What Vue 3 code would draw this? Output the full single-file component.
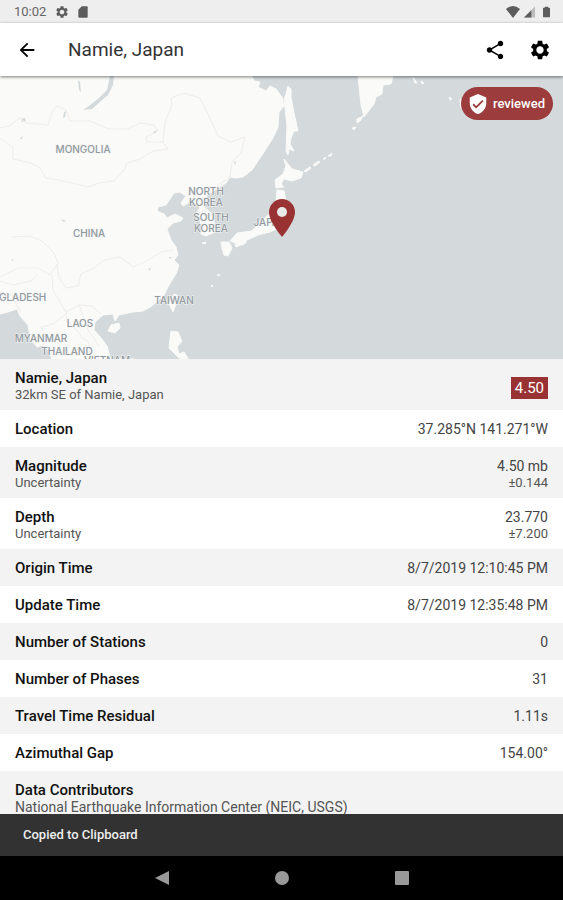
<template>
  <div class="screen">
    <div class="status-bar">
      <span class="clock">10:02</span>
      <svg class="status-icon" viewBox="0 0 24 24"><path :d="icons.gear" /></svg>
      <svg class="status-icon" viewBox="0 0 24 24"><path :d="icons.sdCard" /></svg>
      <div class="status-right">
        <svg class="wifi" viewBox="0 0 14 12"><path d="M0 3Q7-3 14 3L7 12z" /></svg>
        <svg class="signal" viewBox="0 0 12 12">
          <path d="M0 12L12 0V12z" opacity=".35" />
          <path d="M0 12L8 4V12z" />
        </svg>
        <svg class="battery" viewBox="0 0 8 12"><path d="M2 0h4v1h1q1 0 1 1v9q0 1-1 1H1q-1 0-1-1V2q0-1 1-1h1z" /></svg>
      </div>
    </div>

    <header class="app-bar">
      <button class="icon-btn" aria-label="Back">
        <svg viewBox="0 0 24 24"><path :d="icons.back" /></svg>
      </button>
      <h1>Namie, Japan</h1>
      <button class="icon-btn" aria-label="Share">
        <svg viewBox="0 0 24 24"><path :d="icons.share" /></svg>
      </button>
      <button class="icon-btn" aria-label="Settings">
        <svg viewBox="0 0 24 24"><path :d="icons.gear" /></svg>
      </button>
    </header>

    <main class="content">
      <section class="map">
        <svg class="map-canvas" viewBox="0 76 563 283" preserveAspectRatio="xMidYMid slice">
          <g class="land">
            <path v-for="(d, i) in land" :key="i" :d="d" />
          </g>
          <g class="water">
            <path v-for="(d, i) in lakes" :key="i" :d="d" />
          </g>
          <g class="borders">
            <path v-for="(d, i) in borders" :key="i" :d="d" />
          </g>
          <g class="labels">
            <text v-for="l in labels" :key="l.text + l.y" :x="l.x" :y="l.y">{{ l.text }}</text>
          </g>
          <path class="pin" d="M282 199c-7 0-13 6-13 13 0 10 13 25 13 25s13-15 13-25c0-7-6-13-13-13z" />
          <circle class="pin-hole" cx="282" cy="212" r="5" />
        </svg>
        <div class="review-badge">
          <svg viewBox="0 0 24 24"><path :d="icons.shield" /></svg>
          <span>reviewed</span>
        </div>
      </section>

      <dl class="details">
        <div class="row" v-for="row in rows" :key="row.label">
          <dt>
            {{ row.label }}
            <small v-if="row.sub">{{ row.sub }}</small>
            <small v-if="row.source" class="source">{{ row.source }}</small>
          </dt>
          <dd v-if="row.magnitude"><span class="magnitude">{{ row.magnitude }}</span></dd>
          <dd v-else-if="row.value">
            {{ row.value }}
            <small v-if="row.subValue">{{ row.subValue }}</small>
          </dd>
        </div>
      </dl>
    </main>

    <div class="snackbar" role="status">Copied to Clipboard</div>

    <nav class="nav-bar">
      <button aria-label="Back"><svg viewBox="0 0 16 16"><path d="M15 1v14L1 8z" /></svg></button>
      <button aria-label="Home"><svg viewBox="0 0 16 16"><circle cx="8" cy="8" r="7" /></svg></button>
      <button aria-label="Recent apps"><svg viewBox="0 0 16 16"><rect x="1" y="1" width="14" height="14" rx="1" /></svg></button>
    </nav>
  </div>
</template>

<script setup>
const icons = {
  back: 'M20 11H7.83l5.59-5.59L12 4l-8 8 8 8 1.41-1.41L7.83 13H20v-2z',
  share: 'M18 16.08c-.76 0-1.44.3-1.96.77L8.91 12.7c.05-.23.09-.46.09-.7s-.04-.47-.09-.7l7.05-4.11c.54.5 1.25.81 2.04.81 1.66 0 3-1.34 3-3s-1.34-3-3-3-3 1.34-3 3c0 .24.04.47.09.7L8.04 9.81C7.5 9.31 6.79 9 6 9c-1.66 0-3 1.34-3 3s1.34 3 3 3c.79 0 1.5-.31 2.04-.81l7.12 4.16c-.05.21-.08.43-.08.65 0 1.61 1.31 2.92 2.92 2.92s2.92-1.31 2.92-2.92-1.31-2.92-2.92-2.92z',
  gear: 'M19.43 12.98c.04-.32.07-.64.07-.98s-.03-.66-.07-.98l2.11-1.65c.19-.15.24-.42.12-.64l-2-3.46c-.12-.22-.39-.3-.61-.22l-2.49 1c-.52-.4-1.08-.73-1.69-.98l-.38-2.65C14.46 2.18 14.25 2 14 2h-4c-.25 0-.46.18-.49.42l-.38 2.65c-.61.25-1.17.59-1.69.98l-2.49-1c-.23-.09-.49 0-.61.22l-2 3.46c-.13.22-.07.49.12.64l2.11 1.65c-.04.32-.07.65-.07.98s.03.66.07.98l-2.11 1.65c-.19.15-.24.42-.12.64l2 3.46c.12.22.39.3.61.22l2.49-1c.52.4 1.08.73 1.69.98l.38 2.65c.03.24.24.42.49.42h4c.25 0 .46-.18.49-.42l.38-2.65c.61-.25 1.17-.59 1.69-.98l2.49 1c.23.09.49 0 .61-.22l2-3.46c.12-.22.07-.49-.12-.64l-2.11-1.65zM12 16c-2.21 0-4-1.79-4-4s1.79-4 4-4 4 1.79 4 4-1.79 4-4 4z',
  sdCard: 'M18 2h-8L4 8v12c0 1.100.9 2 2 2h12c1.100 0 2-.9 2-2V4c0-1.100-.9-2-2-2z',
  shield: 'M12 1L3 5v6c0 5.550 3.840 10.740 9 12 5.160-1.260 9-6.450 9-12V5l-9-4zm-2 16l-4-4 1.410-1.410L10 14.170l6.590-6.590L18 9l-8 8z'
}

const land = [
  // mainland Asia
  'M0 76H252L254 81 260 82 258 87 266 91 270 86 276 89 282 97 284 106 279 112 278 127 273 138 262 155 252 170 243 177 235 178 230 177 226 183 217 189 207 195 206 202 204 207 211 213 214 220 215 232 206 236 201 234 202 226 199 219 197 212 200 208 196 204 190 202 183 206 181 203 186 196 180 192 174 193 166 205 158 207 157 211 164 214 167 218 175 214 183 218 181 221 173 223 167 229 171 240 176 247 178 255 174 260 179 265 176 274 169 285 164 295 152 306 143 311 133 312 119 315 115 321 113 314 103 315 95 322 94 330 102 339 107 346 111 360H52L50 352 43 345 37 347 31 340 28 325 20 316 17 309 8 312 0 314Z',
  // Sakhalin
  'M288 86L291 89 291 97 294 113 298 131 294 131 291 138 290 144 294 151 289 149 288 155 286 151 287 126 284 99 286 94Z',
  // Hokkaido
  'M284 159L292 169 303 172 301 178 292 181 284 179 281 184 284 187 276 188 275 180 283 174 286 166Z',
  // Honshu
  'M277 190L284 191 286 201 283 226 270 232 258 235 247 240 243 245 235 243 230 241 237 233 252 231 260 222 272 212 276 202Z',
  // Kyushu and Shikoku
  'M221 242L229 242 232 248 228 256 224 255 222 248ZM235 244L245 240 246 243 236 247Z',
  // Hainan, Taiwan, Luzon
  'M111 325L119 323 120 328 115 333 108 331ZM174 294L177 295 176 304 173 312 169 304ZM171 331L178 332 182 341 177 347 179 354 184 352 189 360 179 358 169 348Z',
  // Kamchatka and nearby islands
  'M358 76H393L391 84 383 85 382 94 376 97 374 104 367 113 364 117 361 105ZM357 119L363 116 360 121 357 123ZM352 128L356 127 354 130ZM413 77L417 83 415 83ZM421 81L424 83 422 84ZM449 97L452 99 450 100ZM460 99L463 101 461 108Z',
  // Kuril chain
  'M304 171L310 167 311 168 306 172ZM313 165L319 161 320 162 315 166ZM323 159L326 157 325 159ZM328 156L332 153 331 156ZM202 243L206 242 205 244ZM218 274L220 275 218 276ZM211 285L213 286 212 287ZM113 360L118 358 133 359 138 360Z'
]

const lakes = [
  'M110 76H114L113 85 108 95 101 101 92 109 83 110 89 106 99 98 107 90Z',
  'M21 119L25 118 26 121 22 122ZM64 112L66 111 65 117 63 118ZM20 138L23 136 21 140ZM153 132L157 130 155 134ZM61 219L66 221 63 222ZM78 80L80 82 81 92 79 90ZM234 162L236 161 235 166ZM268 76L286 76 281 82 285 85 275 84ZM148 269L151 268 150 271ZM169 257L172 257 170 259ZM11 259L14 260 12 261Z'
]

const borders = [
  'M0 128L9 126 20 118 27 123 48 125 52 112 57 106 66 110 70 121 90 121 109 129 127 129 140 123 154 125 158 131 146 137 147 142 163 142 168 149 153 151 140 159 127 163 124 170 114 181 99 183 88 187 72 183 59 180 46 178 40 168 31 163 13 159 13 147 0 138',
  'M163 142L165 122 172 105 171 98 184 93 200 98 207 112 218 136 231 142 245 137 241 153 232 162 230 177',
  'M230 177L214 188 199 188 186 196M197 215L208 207M0 277L18 268 38 268 50 275 58 263 54 253 42 241 30 236 12 237',
  'M0 281L13 285 31 281 39 273M57 264L59 278 66 288 78 286 81 274 94 268 104 260 120 257 133 267 147 261 161 252 173 250',
  'M52 275L53 290 60 302 66 312 79 305 92 306 101 314M66 312L67 322 77 330 82 338 88 341 91 354M79 305L84 318 88 330 99 346M66 314L53 324 41 327 47 340 43 345M0 292L12 295 21 314'
]

const labels = [
  { text: 'MONGOLIA', x: 83, y: 153 },
  { text: 'CHINA', x: 89, y: 237 },
  { text: 'NORTH', x: 206, y: 195 },
  { text: 'KOREA', x: 206, y: 206 },
  { text: 'SOUTH', x: 211, y: 221 },
  { text: 'KOREA', x: 211, y: 232 },
  { text: 'JAPAN', x: 270, y: 226 },
  { text: 'BANGLADESH', x: 12, y: 301 },
  { text: 'TAIWAN', x: 174, y: 304 },
  { text: 'LAOS', x: 80, y: 327 },
  { text: 'MYANMAR', x: 41, y: 342 },
  { text: 'THAILAND', x: 67, y: 355 },
  { text: 'VIETNAM', x: 107, y: 364 }
]

const rows = [
  { label: 'Namie, Japan', sub: '32km SE of Namie, Japan', magnitude: '4.50' },
  { label: 'Location', value: '37.285°N 141.271°W' },
  { label: 'Magnitude', sub: 'Uncertainty', value: '4.50 mb', subValue: '±0.144' },
  { label: 'Depth', sub: 'Uncertainty', value: '23.770', subValue: '±7.200' },
  { label: 'Origin Time', value: '8/7/2019 12:10:45 PM' },
  { label: 'Update Time', value: '8/7/2019 12:35:48 PM' },
  { label: 'Number of Stations', value: '0' },
  { label: 'Number of Phases', value: '31' },
  { label: 'Travel Time Residual', value: '1.11s' },
  { label: 'Azimuthal Gap', value: '154.00°' },
  { label: 'Data Contributors', source: 'National Earthquake Information Center (NEIC, USGS)' }
]
</script>

<style>
body {
  background: #fff;
}
</style>

<style scoped>
.screen {
  display: flex;
  flex-direction: column;
  height: 100vh;
  font-family: Roboto, "Liberation Sans", sans-serif;
  color: #111;
}

button {
  display: flex;
  align-items: center;
  justify-content: center;
  padding: 0;
  border: none;
  background: none;
  cursor: pointer;
}

.status-bar {
  display: flex;
  flex-shrink: 0;
  align-items: center;
  gap: 7px;
  height: 23px;
  padding: 0 13px 0 14px;
  background: #eee;
  color: #666;
  fill: #5c5c5c;
}

.clock {
  margin-right: 2px;
  font-size: 13px;
}

.status-icon {
  width: 14px;
  height: 14px;
}

.status-right {
  display: flex;
  gap: 4px;
  margin-left: auto;
}

.wifi {
  width: 14px;
  height: 12px;
}

.signal {
  width: 11px;
  height: 12px;
}

.battery {
  width: 7px;
  height: 12px;
  margin-left: 4px;
}

.app-bar {
  position: relative;
  z-index: 1;
  display: flex;
  flex-shrink: 0;
  align-items: center;
  gap: 21px;
  height: 53px;
  padding: 0 11px 0 15px;
  background: #fff;
  box-shadow: 0 1px 3px rgba(0, 0, 0, 0.5);
}

.app-bar h1 {
  flex: 1;
  margin: 0 0 0 8px;
  font-size: 19px;
  font-weight: 400;
  color: #333;
}

.icon-btn {
  width: 24px;
  height: 24px;
}

.icon-btn svg {
  width: 22px;
  height: 22px;
}

.content {
  flex: 1;
  min-height: 0;
  overflow-y: auto;
  scrollbar-width: none;
}

.map {
  position: relative;
  height: 283px;
  background: #d4dadc;
}

.map-canvas {
  display: block;
  width: 100%;
  height: 100%;
}

.land {
  fill: #fafaf8;
  stroke: #fafaf8;
  stroke-linejoin: round;
}

.water {
  fill: #d4dadc;
}

.borders {
  fill: none;
  stroke: #f0eced;
  stroke-linejoin: round;
}

.labels {
  fill: #929a9f;
  stroke: #f4f5f4;
  stroke-width: 1px;
  paint-order: stroke;
  font-family: Inter, sans-serif;
  font-size: 10px;
  font-weight: 500;
  text-anchor: middle;
}

.pin {
  fill: #993333;
}

.pin-hole {
  fill: #e9ebeb;
}

.review-badge {
  position: absolute;
  top: 11px;
  right: 10px;
  display: flex;
  align-items: center;
  gap: 4px;
  height: 33px;
  padding: 0 8px 0 6px;
  border-radius: 17px;
  background: #9c3c3c;
  color: #fff;
  font-size: 13px;
  font-weight: 500;
}

.review-badge svg {
  width: 22px;
  height: 22px;
  fill: #fff;
}

.details {
  margin: 0;
}

.row {
  display: flex;
  align-items: center;
  justify-content: space-between;
  padding: 9px 15px 8px;
  font-size: 14px;
  line-height: 20px;
}

.row:nth-child(odd) {
  background: #f3f3f3;
}

.row dt {
  font-size: 15px;
  font-weight: 500;
}

.row dd {
  margin: 0;
  color: #444;
  text-align: right;
}

.row small {
  display: block;
  font-size: 13px;
  font-weight: 400;
  line-height: 14px;
  color: #555;
}

.row .source {
  font-size: 14px;
}

.magnitude {
  display: block;
  margin-top: 6px;
  padding: 0 4px;
  background: #993333;
  color: #fff;
  font-size: 15px;
  line-height: 22px;
}

.snackbar {
  flex-shrink: 0;
  padding: 0 23px;
  background: #323232;
  color: #eee;
  font-size: 13px;
  font-weight: 500;
  line-height: 42px;
}

.nav-bar {
  display: flex;
  flex-shrink: 0;
  align-items: center;
  justify-content: center;
  gap: 104px;
  height: 44px;
  background: #000;
}

.nav-bar svg {
  width: 16px;
  height: 16px;
  fill: #999;
}
</style>
